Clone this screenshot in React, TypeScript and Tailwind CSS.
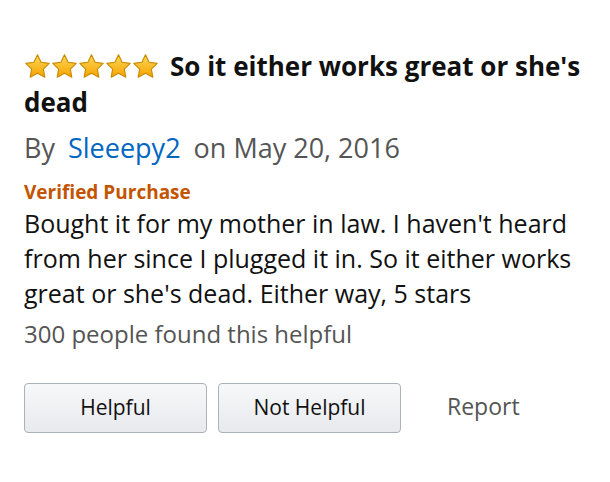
import React from "react";

const Star = () => (
  <svg width="27" height="27" viewBox="0 0 24 24">
    <defs>
      <linearGradient id="sg" x1="0" y1="0" x2="0" y2="1">
        <stop offset="0" stopColor="#ffd85a" />
        <stop offset="1" stopColor="#f5a300" />
      </linearGradient>
    </defs>
    <path
      d="M12 1.6l3.2 6.6 7.2 1-5.2 5.1 1.3 7.2L12 18.1l-6.5 3.4 1.3-7.2L1.6 9.2l7.2-1z"
      fill="url(#sg)"
      stroke="#c98a00"
      strokeWidth="1"
      strokeLinejoin="round"
    />
  </svg>
);

export default function App() {
  return (
    <div
      className="w-[610px] h-[482px] bg-white px-[24px] pt-[48px]"
      style={{ fontFamily: '"Open Sans", "Noto Sans", sans-serif' }}
    >
      <div className="text-[26px] leading-[36px] font-bold text-[#111]">
        <span className="inline-flex items-center align-[-4px] mr-[11px]">
          <Star />
          <Star />
          <Star />
          <Star />
          <Star />
        </span>
        So it either works great or she's dead
      </div>
      <div className="mt-[10px] text-[27px] leading-[36px] text-[#555]">
        By <span className="text-[#0066c0] ml-[6px] mr-[6px]">Sleeepy2</span> on May 20, 2016
      </div>
      <div className="mt-[14px] text-[19px] leading-[24px] font-bold text-[#c45500]">
        Verified Purchase
      </div>
      <div className="mt-[2px] text-[25px] leading-[35px] text-[#111]">
        Bought it for my mother in law. I haven't heard from her since I plugged it in. So it either works great or she's dead. Either way, 5 stars
      </div>
      <div className="mt-[8px] text-[24px] leading-[30px] text-[#555]">
        300 people found this helpful
      </div>
      <div className="mt-[34px] flex items-center">
        <button className="w-[183px] h-[50px] rounded-[4px] border border-[#adb1b8] bg-gradient-to-b from-[#f7f8fa] to-[#e7e9ec] text-[21px] text-[#111]">
          Helpful
        </button>
        <button className="ml-[11px] w-[183px] h-[50px] rounded-[4px] border border-[#adb1b8] bg-gradient-to-b from-[#f7f8fa] to-[#e7e9ec] text-[21px] text-[#111]">
          Not Helpful
        </button>
        <span className="ml-[46px] text-[23px] text-[#555] -mt-[4px]">Report</span>
      </div>
    </div>
  );
}
